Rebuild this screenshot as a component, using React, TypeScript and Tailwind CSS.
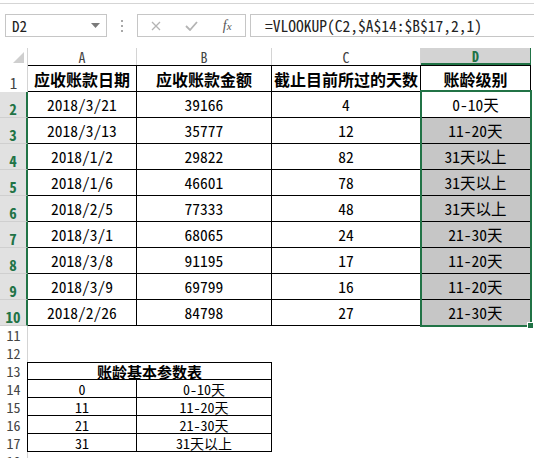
import React from 'react';

const mono = "font-['Noto_Sans_Mono_CJK_SC','Liberation_Mono','Noto_Sans_CJK_SC',monospace]";

const rows = [
  ['2018/3/21', '39166', '4', '0-10天'],
  ['2018/3/13', '35777', '12', '11-20天'],
  ['2018/1/2', '29822', '82', '31天以上'],
  ['2018/1/6', '46601', '78', '31天以上'],
  ['2018/2/5', '77333', '48', '31天以上'],
  ['2018/3/1', '68065', '24', '21-30天'],
  ['2018/3/8', '91195', '17', '11-20天'],
  ['2018/3/9', '69799', '16', '11-20天'],
  ['2018/2/26', '84798', '27', '21-30天'],
];

const params = [
  ['0', '0-10天'],
  ['11', '11-20天'],
  ['21', '21-30天'],
  ['31', '31天以上'],
];

const headers = ['应收账款日期', '应收账款金额', '截止目前所过的天数', '账龄级别'];

const App = () => {
  return (
    <div className={`w-[534px] h-[458px] overflow-hidden bg-white text-black ${mono}`}>
      {/* Formula bar */}
      <div className="h-[48px] pt-[3px]">
        <div className="flex items-start border-t border-[#d5d5d5] pt-[10px]">
          <div className="ml-[5px] flex h-[23px] w-[102px] items-center justify-between border border-[#c6c6c6] pl-[6px] pr-[6px]">
            <span className="text-[15px] leading-none text-[#222]">D2</span>
            <svg width="9" height="5" viewBox="0 0 9 5">
              <polygon points="0,0 9,0 4.5,5" fill="#7a7a7a" />
            </svg>
          </div>
          <div className="flex w-[30px] flex-col items-center gap-[3px] pt-[6px]">
            <span className="h-[2px] w-[2px] bg-[#a8a8a8]" />
            <span className="h-[2px] w-[2px] bg-[#a8a8a8]" />
            <span className="h-[2px] w-[2px] bg-[#a8a8a8]" />
          </div>
          <div className="flex h-[23px] w-[109px] items-center border border-[#c6c6c6]">
            <div className="flex w-[36px] justify-center">
              <svg width="10" height="10" viewBox="0 0 10 10">
                <path d="M1 1 L9 9 M9 1 L1 9" stroke="#b4b4b4" strokeWidth="1.3" fill="none" />
              </svg>
            </div>
            <div className="flex w-[36px] justify-center">
              <svg width="13" height="10" viewBox="0 0 13 10">
                <path d="M1 5 L5 9 L12 1" stroke="#b4b4b4" strokeWidth="1.8" fill="none" />
              </svg>
            </div>
            <div className="flex w-[36px] justify-center">
              <span className="font-['Liberation_Serif',serif] text-[14px] italic leading-none text-[#555]">
                f<span className="text-[11px]">x</span>
              </span>
            </div>
          </div>
          <div className="ml-[4px] flex h-[23px] flex-1 items-center border border-r-0 border-[#c6c6c6] pl-[14px]">
            <span className="text-[15.5px] leading-none text-[#222]">=VLOOKUP(C2,$A$14:$B$17,2,1)</span>
          </div>
        </div>
      </div>

      {/* Column headers */}
      <div className="flex h-[17px] text-[14px] leading-none">
        <div className="flex w-[28px] items-end justify-end border-r border-[#d4d4d4] pb-[2px] pr-[3px]">
          <svg width="11" height="11" viewBox="0 0 11 11">
            <polygon points="11,0 11,11 0,11" fill="#cfcfcf" />
          </svg>
        </div>
        <div className="flex w-[109px] items-center justify-center border-r border-[#d4d4d4] text-[#444]">A</div>
        <div className="flex w-[135px] items-center justify-center border-r border-[#d4d4d4] text-[#444]">B</div>
        <div className="flex w-[149px] items-center justify-center border-r border-[#d4d4d4] text-[#444]">C</div>
        <div className="flex w-[110px] items-center justify-center border-b-2 border-r border-[#217346] bg-[#d3d3d3] font-bold text-[#217346]">D</div>
        <div className="flex-1" />
      </div>

      {/* Rows 1-10 */}
      <div className="relative">
        <div className="flex h-[27px]">
          <div className="flex w-[28px] items-end justify-center border-r border-[#d4d4d4] pb-[2px] text-[15px] leading-none text-[#444]">1</div>
          {headers.map((h, i) => (
            <div
              key={h}
              className={`flex items-center justify-center border-b border-r border-t border-black font-['Noto_Sans_CJK_SC',sans-serif] text-[16px] font-bold leading-none ${
                ['w-[109px]', 'w-[135px]', 'w-[149px]', 'w-[110px]'][i]
              }`}
            >
              {h}
            </div>
          ))}
        </div>

        {rows.map((r, idx) => (
          <div key={idx} className="flex h-[26px]">
            <div className="flex w-[28px] items-end justify-center border-b border-r-2 border-b-[#cfcfcf] border-r-[#217346] bg-[#e1e1e1] pb-[1px] text-[15px] font-bold leading-none text-[#217346]">
              {idx + 2}
            </div>
            <div className="flex w-[109px] items-center justify-center border-b border-r border-black text-[15.5px] leading-none">{r[0]}</div>
            <div className="flex w-[135px] items-center justify-center border-b border-r border-black text-[15.5px] leading-none">{r[1]}</div>
            <div className="flex w-[149px] items-center justify-center border-b border-r border-black text-[15.5px] leading-none">{r[2]}</div>
            <div
              className={`flex w-[110px] items-center justify-center border-b border-r border-black text-[15.5px] leading-none ${
                idx === 0 ? 'bg-white' : 'bg-[#c6c6c6]'
              }`}
            >
              {r[3]}
            </div>
          </div>
        ))}

        {/* selection outline D2:D10 */}
        <div className="pointer-events-none absolute left-[420px] top-[25px] h-[237px] w-[112px] border-2 border-[#217346]">
          <div className="absolute -bottom-[4px] -right-[4px] h-[7px] w-[7px] border border-white bg-[#217346]" />
        </div>
      </div>

      {/* Rows 11-18 */}
      {[11, 12].map((n) => (
        <div key={n} className="flex h-[18px]">
          <div className="flex w-[28px] items-center justify-center border-r border-[#d4d4d4] text-[14px] leading-none text-[#444]">{n}</div>
        </div>
      ))}
      <div className="flex h-[18px]">
        <div className="flex w-[28px] items-center justify-center border-r border-black text-[14px] leading-none text-[#444]">13</div>
        <div className="flex w-[244px] items-center justify-center border-b border-r border-t border-black font-['Noto_Sans_CJK_SC',sans-serif] text-[15px] font-bold leading-none">
          账龄基本参数表
        </div>
      </div>
      {params.map((p, i) => (
        <div key={p[0]} className="flex h-[18px]">
          <div className="flex w-[28px] items-center justify-center border-r border-black text-[14px] leading-none text-[#444]">{i + 14}</div>
          <div className="flex w-[109px] items-center justify-center border-b border-r border-black text-[14px] leading-none">{p[0]}</div>
          <div className="flex w-[135px] items-center justify-center border-b border-r border-black text-[14px] leading-none">{p[1]}</div>
        </div>
      ))}
      <div className="flex h-[18px]">
        <div className="flex w-[28px] items-center justify-center border-r border-[#d4d4d4] text-[14px] leading-none text-[#444]">18</div>
      </div>
    </div>
  );
};

export default App;
